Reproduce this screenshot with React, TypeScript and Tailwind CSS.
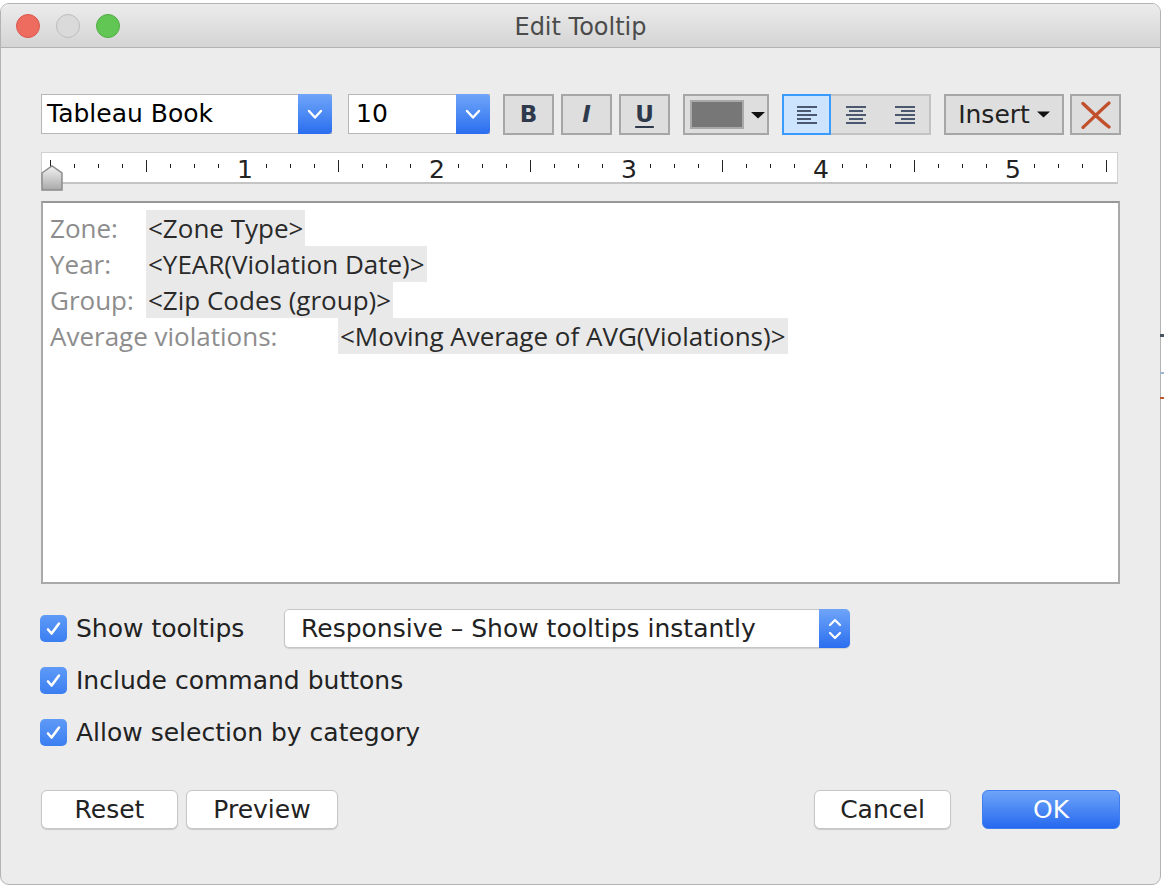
import React from 'react';

const Chevron = () => (
  <svg width="34" height="40" viewBox="0 0 34 40" fill="none">
    <path d="M11 17l6 6.5 6-6.5" stroke="white" strokeWidth="2.4" strokeLinecap="round" strokeLinejoin="round" />
  </svg>
);

const Check = () => (
  <svg width="27" height="27" viewBox="0 0 27 27" fill="none">
    <path d="M8 14.5l3.6 4L19 8.5" stroke="white" strokeWidth="2.6" strokeLinecap="round" strokeLinejoin="round" />
  </svg>
);

function AlignIcon({ kind }: { kind: 'left' | 'center' | 'right' }) {
  const rows = [0, 1, 2, 3, 4];
  return (
    <svg width="22" height="20" viewBox="0 0 22 20">
      {rows.map((r) => {
        const long = r % 2 === 0;
        const w = long ? 20 : 14;
        const x = kind === 'left' ? 1 : kind === 'center' ? 1 + (20 - w) / 2 : 21 - w;
        return <rect key={r} x={x} y={1 + r * 4} width={w} height={2} fill="#4a5870" />;
      })}
    </svg>
  );
}

function Ruler() {
  const ticks = Array.from({ length: 45 }, (_, k) => k);
  return (
    <div className="relative w-[1077px] h-[32px] bg-white border border-[#d0d0d0] border-b-2 border-b-[#c4c4c4]">
      <svg className="absolute left-0 top-0" width="1075" height="29">
        {ticks.map((k) => {
          if (k % 8 === 0 && k > 0) return null;
          const x = 8.5 + 24 * k;
          const major = k % 4 === 0;
          return (
            <line
              key={k}
              x1={x}
              x2={x}
              y1={major ? 7 : 11}
              y2={major ? 19 : 15}
              stroke="#222"
              strokeWidth="1"
            />
          );
        })}
      </svg>
      {[1, 2, 3, 4, 5].map((n) => (
        <span
          key={n}
          className="absolute top-[3px] w-[30px] -ml-[15px] text-center text-[25px] leading-[28px] text-[#222]"
          style={{ left: 11 + 192 * n }}
        >
          {n}
        </span>
      ))}
      <svg className="absolute -left-[1px] top-[12px]" width="22" height="26" viewBox="0 0 22 26">
        <defs>
          <linearGradient id="mk" x1="0" y1="0" x2="0" y2="1">
            <stop offset="0" stopColor="#f2f2f2" />
            <stop offset="1" stopColor="#a9a9a9" />
          </linearGradient>
        </defs>
        <path d="M1 8L11 1l10 7v17H1z" fill="url(#mk)" stroke="#8c8c8c" strokeWidth="1.5" />
      </svg>
    </div>
  );
}

function Checkbox({ label }: { label: string }) {
  return (
    <div className="flex items-center">
      <div className="w-[27px] h-[27px] -ml-[1px] rounded-[5px] bg-gradient-to-b from-[#5e9af7] to-[#3b7ef1] flex items-center justify-center">
        <Check />
      </div>
      <span className="ml-[9px] text-[25px] text-[#222]">{label}</span>
    </div>
  );
}

const fields = [
  { label: 'Zone:', w: 'w-[96px]', value: '<Zone Type>' },
  { label: 'Year:', w: 'w-[96px]', value: '<YEAR(Violation Date)>' },
  { label: 'Group:', w: 'w-[96px]', value: '<Zip Codes (group)>' },
  { label: 'Average violations:', w: 'w-[288px]', value: '<Moving Average of AVG(Violations)>' },
];

export default function App() {
  return (
    <div className="relative w-[1164px] h-[886px] bg-white overflow-hidden pt-[3px] font-['DejaVu_Sans',sans-serif]">
      <div className="absolute right-0 top-[334px] w-[4px] h-[3px] bg-[#4b5560]" />
      <div className="absolute right-0 top-[372px] w-[4px] h-[2px] bg-[#9fb7cf]" />
      <div className="absolute right-0 top-[397px] w-[4px] h-[2px] bg-[#c0582e]" />

      <div className="w-[1161px] h-[882px] rounded-[9px] border border-[#b3b3b3] bg-[#ececec] flex flex-col overflow-hidden">
        {/* title bar */}
        <div className="relative h-[44px] flex items-center gap-[16px] pl-[15px] border-b border-[#b3b3b3] bg-gradient-to-b from-[#ececec] to-[#d4d4d4]">
          <div className="w-[24px] h-[24px] rounded-full bg-[#ee6b5f] border border-[#d9574c]" />
          <div className="w-[24px] h-[24px] rounded-full bg-[#dadada] border border-[#bdbdbd]" />
          <div className="w-[24px] h-[24px] rounded-full bg-[#62c655] border border-[#4fae42]" />
          <div className="absolute inset-0 flex items-center justify-center pt-[2px] text-[24px] text-[#4b4b4b] pointer-events-none">
            Edit Tooltip
          </div>
        </div>

        <div className="flex flex-col pl-[40px] pt-[46px]">
          {/* toolbar */}
          <div className="flex items-start h-[41px]">
            <div className="flex w-[291px] h-[40px] bg-white border border-[#b6b6b6]">
              <span className="flex-1 pl-[5px] text-[25px] leading-[38px] text-black">Tableau Book</span>
              <div className="w-[34px] -my-[1px] -mr-[1px] rounded-r-[4px] bg-gradient-to-b from-[#6fa5f8] to-[#2a6def]">
                <Chevron />
              </div>
            </div>
            <div className="flex ml-[16px] w-[142px] h-[40px] bg-white border border-[#b6b6b6]">
              <span className="flex-1 pl-[7px] text-[25px] leading-[38px] text-black">10</span>
              <div className="w-[34px] -my-[1px] -mr-[1px] rounded-r-[4px] bg-gradient-to-b from-[#6fa5f8] to-[#2a6def]">
                <Chevron />
              </div>
            </div>
            <div className="ml-[13px] w-[51px] h-[41px] border-2 border-[#a6a6a6] bg-[#dedede] flex items-center justify-center text-[23px] font-bold text-[#2e3a4c]">
              B
            </div>
            <div className="ml-[7px] w-[51px] h-[41px] border-2 border-[#a6a6a6] bg-[#dedede] flex items-center justify-center text-[23px] font-bold italic text-[#2e3a4c]">
              I
            </div>
            <div className="ml-[7px] w-[51px] h-[41px] border-2 border-[#a6a6a6] bg-[#dedede] flex items-center justify-center text-[23px] font-bold underline underline-offset-[4px] text-[#2e3a4c]">
              U
            </div>
            <div className="ml-[13px] w-[86px] h-[41px] border-2 border-[#a6a6a6] bg-[#dedede] flex items-center pl-[5px]">
              <div className="w-[54px] h-[29px] bg-[#777777] border-2 border-[#a9a9a9]" />
              <svg className="ml-[7px]" width="14" height="8" viewBox="0 0 14 8">
                <path d="M0 1h14L7 7.5z" fill="#111" />
              </svg>
            </div>
            <div className="ml-[13px] flex h-[41px]">
              <div className="w-[49px] h-[41px] border-2 border-[#3a9bfc] bg-[#cce4fe] flex items-center justify-center">
                <AlignIcon kind="left" />
              </div>
              <div className="w-[50px] h-[41px] border-y-2 border-[#c3c3c3] bg-[#dedede] flex items-center justify-center">
                <AlignIcon kind="center" />
              </div>
              <div className="w-[50px] h-[41px] border-2 border-l-0 border-[#c3c3c3] bg-[#dedede] flex items-center justify-center">
                <AlignIcon kind="right" />
              </div>
            </div>
            <div className="ml-[13px] w-[120px] h-[41px] border-2 border-[#a6a6a6] bg-[#dedede] flex items-center justify-center gap-[7px] text-[25px] text-[#222]">
              <span>Insert</span>
              <svg width="13" height="7" viewBox="0 0 13 7">
                <path d="M0 0.5h13L6.5 6.5z" fill="#111" />
              </svg>
            </div>
            <div className="ml-[6px] w-[51px] h-[41px] border-2 border-[#a6a6a6] bg-[#dedede] flex items-center justify-center">
              <svg width="32" height="28" viewBox="0 0 32 28" fill="none">
                <path d="M3 2.5C12 11 20 19 29 26" stroke="#c1502c" strokeWidth="3.4" strokeLinecap="round" />
                <path d="M29 2C20 10 12 18 3 26.5" stroke="#c1502c" strokeWidth="3.2" strokeLinecap="round" />
              </svg>
            </div>
          </div>

          {/* ruler */}
          <div className="mt-[17px]">
            <Ruler />
          </div>

          {/* editor */}
          <div className="mt-[17px] w-[1079px] h-[383px] bg-white border-2 border-[#a9a9a9] border-t-[#979797] pt-[7px] pl-[7px] font-['Open_Sans',sans-serif] text-[26px] leading-[36px]">
            {fields.map((f) => (
              <div key={f.label} className="flex">
                <span className={`${f.w} text-[#8d8d8d]`}>{f.label}</span>
                <span className="bg-[#e9e9e9] px-[2px] text-[#2a2a2a] font-medium">{f.value}</span>
              </div>
            ))}
          </div>

          {/* options */}
          <div className="mt-[25px] flex flex-col gap-[13px]">
            <div className="flex items-center h-[39px]">
              <div className="w-[243px]">
                <Checkbox label="Show tooltips" />
              </div>
              <div className="flex w-[566px] h-[39px] rounded-[5px] bg-white border border-[#c6c6c6] shadow-[0_1px_1px_rgba(0,0,0,0.12)]">
                <span className="flex-1 pl-[16px] text-[25px] leading-[37px] text-[#222]">
                  Responsive – Show tooltips instantly
                </span>
                <div className="w-[31px] -my-[1px] -mr-[1px] rounded-r-[5px] bg-gradient-to-b from-[#6fa5f8] to-[#2a6def] flex items-center justify-center">
                  <svg width="16" height="28" viewBox="0 0 16 28" fill="none">
                    <path d="M3 10l5-5 5 5M3 18l5 5 5-5" stroke="white" strokeWidth="2.2" strokeLinecap="round" strokeLinejoin="round" />
                  </svg>
                </div>
              </div>
            </div>
            <div className="flex items-center h-[39px]">
              <Checkbox label="Include command buttons" />
            </div>
            <div className="flex items-center h-[39px]">
              <Checkbox label="Allow selection by category" />
            </div>
          </div>

          {/* buttons */}
          <div className="mt-[38px] w-[1079px] flex items-center">
            <button className="w-[137px] h-[39px] rounded-[6px] bg-white border border-[#c6c6c6] shadow-[0_1px_1px_rgba(0,0,0,0.15)] text-[25px] text-[#222]">
              Reset
            </button>
            <button className="ml-[8px] w-[152px] h-[39px] rounded-[6px] bg-white border border-[#c6c6c6] shadow-[0_1px_1px_rgba(0,0,0,0.15)] text-[25px] text-[#222]">
              Preview
            </button>
            <div className="flex-1" />
            <button className="w-[137px] h-[39px] rounded-[6px] bg-white border border-[#c6c6c6] shadow-[0_1px_1px_rgba(0,0,0,0.15)] text-[25px] text-[#222]">
              Cancel
            </button>
            <button className="ml-[31px] w-[138px] h-[39px] rounded-[6px] bg-gradient-to-b from-[#6ea4f8] to-[#2668ef] border border-[#3f7df0] text-[25px] text-white">
              OK
            </button>
          </div>
        </div>
      </div>
    </div>
  );
}
